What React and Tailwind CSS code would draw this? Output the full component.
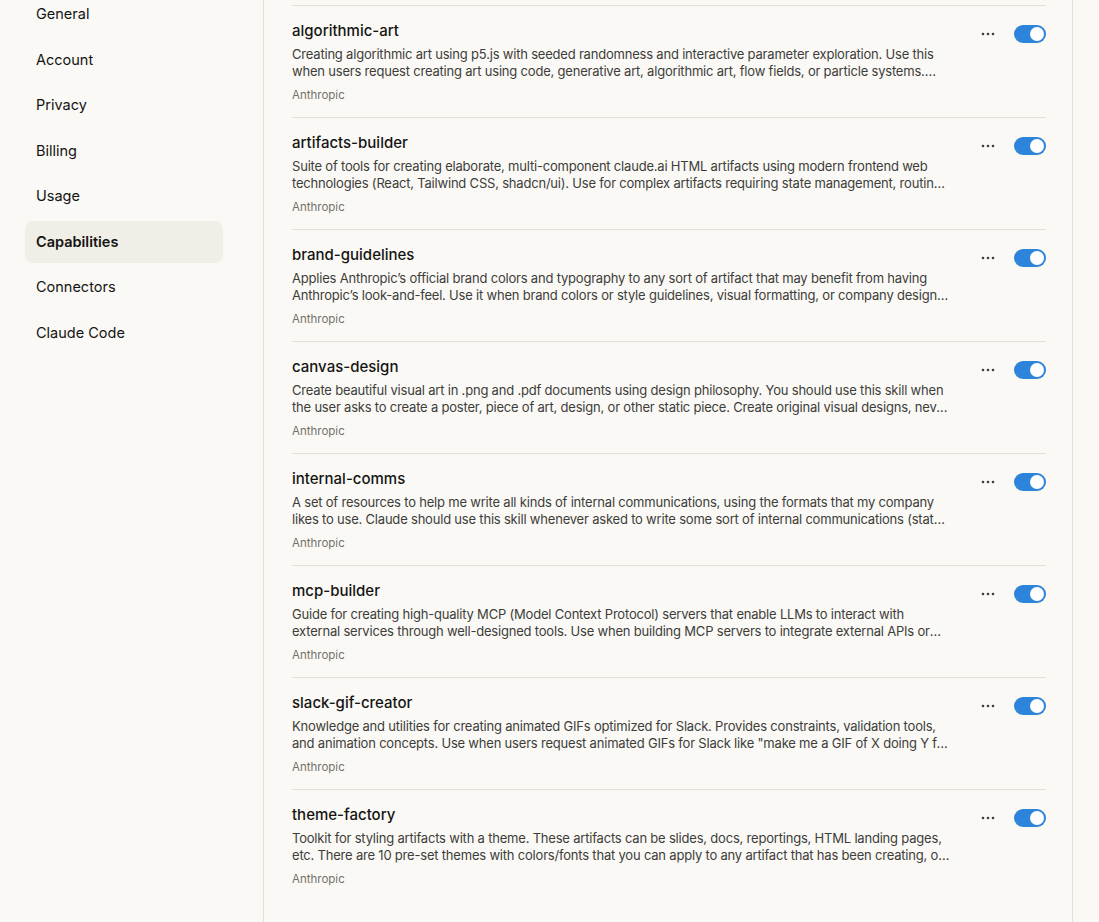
import React, { useState } from "react";

const navItems = [
  "General",
  "Account",
  "Privacy",
  "Billing",
  "Usage",
  "Capabilities",
  "Connectors",
  "Claude Code",
];

const skills = [
  {
    name: "algorithmic-art",
    description:
      "Creating algorithmic art using p5.js with seeded randomness and interactive parameter exploration. Use this when users request creating art using code, generative art, algorithmic art, flow fields, or particle systems. Create original algorithmic art rather than copying existing artists' work.",
  },
  {
    name: "artifacts-builder",
    description:
      "Suite of tools for creating elaborate, multi-component claude.ai HTML artifacts using modern frontend web technologies (React, Tailwind CSS, shadcn/ui). Use for complex artifacts requiring state management, routing, or shadcn/ui components.",
  },
  {
    name: "brand-guidelines",
    description:
      "Applies Anthropic\u2019s official brand colors and typography to any sort of artifact that may benefit from having Anthropic\u2019s look-and-feel. Use it when brand colors or style guidelines, visual formatting, or company design standards apply.",
  },
  {
    name: "canvas-design",
    description:
      "Create beautiful visual art in .png and .pdf documents using design philosophy. You should use this skill when the user asks to create a poster, piece of art, design, or other static piece. Create original visual designs, never copying existing artists' work.",
  },
  {
    name: "internal-comms",
    description:
      "A set of resources to help me write all kinds of internal communications, using the formats that my company likes to use. Claude should use this skill whenever asked to write some sort of internal communications (status reports, leadership updates, etc.).",
  },
  {
    name: "mcp-builder",
    description:
      "Guide for creating high-quality MCP (Model Context Protocol) servers that enable LLMs to interact with external services through well-designed tools. Use when building MCP servers to integrate external APIs or services, whether in Python (FastMCP) or Node/TypeScript (MCP SDK).",
  },
  {
    name: "slack-gif-creator",
    description:
      "Knowledge and utilities for creating animated GIFs optimized for Slack. Provides constraints, validation tools, and animation concepts. Use when users request animated GIFs for Slack like \"make me a GIF of X doing Y for Slack.\"",
  },
  {
    name: "theme-factory",
    description:
      "Toolkit for styling artifacts with a theme. These artifacts can be slides, docs, reportings, HTML landing pages, etc. There are 10 pre-set themes with colors/fonts that you can apply to any artifact that has been creating, or can generate a new theme on-the-fly.",
  },
];

function Toggle({ on, onChange }) {
  return (
    <button
      type="button"
      onClick={onChange}
      className={`flex h-[18px] w-[32px] items-center rounded-full px-[2px] ${
        on ? "bg-[#2c84db] justify-end" : "bg-[#d6d3c9] justify-start"
      }`}
    >
      <span className="h-[14px] w-[14px] rounded-full bg-white"></span>
    </button>
  );
}

function SkillRow({ skill, on, onToggle }) {
  return (
    <div className="flex border-t border-[#e3e1da] pt-[15px] pb-[15px]">
      <div className="w-[658px] min-w-0">
        <div className="text-[15px] leading-[20px] font-medium text-[#141413]">
          {skill.name}
        </div>
        <p className="mt-[5px] line-clamp-2 text-[13px] leading-[17px] tracking-[-0.2px] text-[#3d3d3a]">
          {skill.description}
        </p>
        <div className="mt-[8px] text-[11.5px] leading-[14px] text-[#73726c]">
          Anthropic
        </div>
      </div>
      <div className="ml-auto mt-[3px] flex h-[20px] items-center gap-[18px]">
        <button type="button" className="flex h-[20px] w-[16px] items-center justify-center text-[#3d3d3a]">
          <svg width="14" height="4" viewBox="0 0 14 4" fill="currentColor">
            <circle cx="2" cy="2" r="1.3" />
            <circle cx="7" cy="2" r="1.3" />
            <circle cx="12" cy="2" r="1.3" />
          </svg>
        </button>
        <Toggle on={on} onChange={onToggle} />
      </div>
    </div>
  );
}

export default function App() {
  const [active, setActive] = useState("Capabilities");
  const [enabled, setEnabled] = useState(skills.map(() => true));

  const toggle = (i) => {
    setEnabled(enabled.map((v, j) => (j === i ? !v : v)));
  };

  return (
    <div
      className="flex h-[922px] overflow-hidden bg-[#faf9f5]"
      style={{ fontFamily: "Inter, 'Noto Sans', sans-serif" }}
    >
      <nav className="-mt-[7px] w-[263px] shrink-0 pl-[25px] pr-[40px]">
        <ul className="flex flex-col gap-[3.5px]">
          {navItems.map((item) => (
            <li key={item}>
              <button
                type="button"
                onClick={() => setActive(item)}
                className={`flex h-[42px] w-full items-center rounded-[8px] px-[11px] text-left text-[14.5px] ${
                  active === item
                    ? "bg-[#f0eee6] font-semibold text-[#141413]"
                    : "text-[#141413]"
                }`}
              >
                {item}
              </button>
            </li>
          ))}
        </ul>
      </nav>
      <main className="w-[810px] shrink-0 border-x border-[#e3e1da] pl-[28px] pr-[26px] pt-[5px]">
        {skills.map((skill, i) => (
          <SkillRow
            key={skill.name}
            skill={skill}
            on={enabled[i]}
            onToggle={() => toggle(i)}
          />
        ))}
      </main>
    </div>
  );
}
